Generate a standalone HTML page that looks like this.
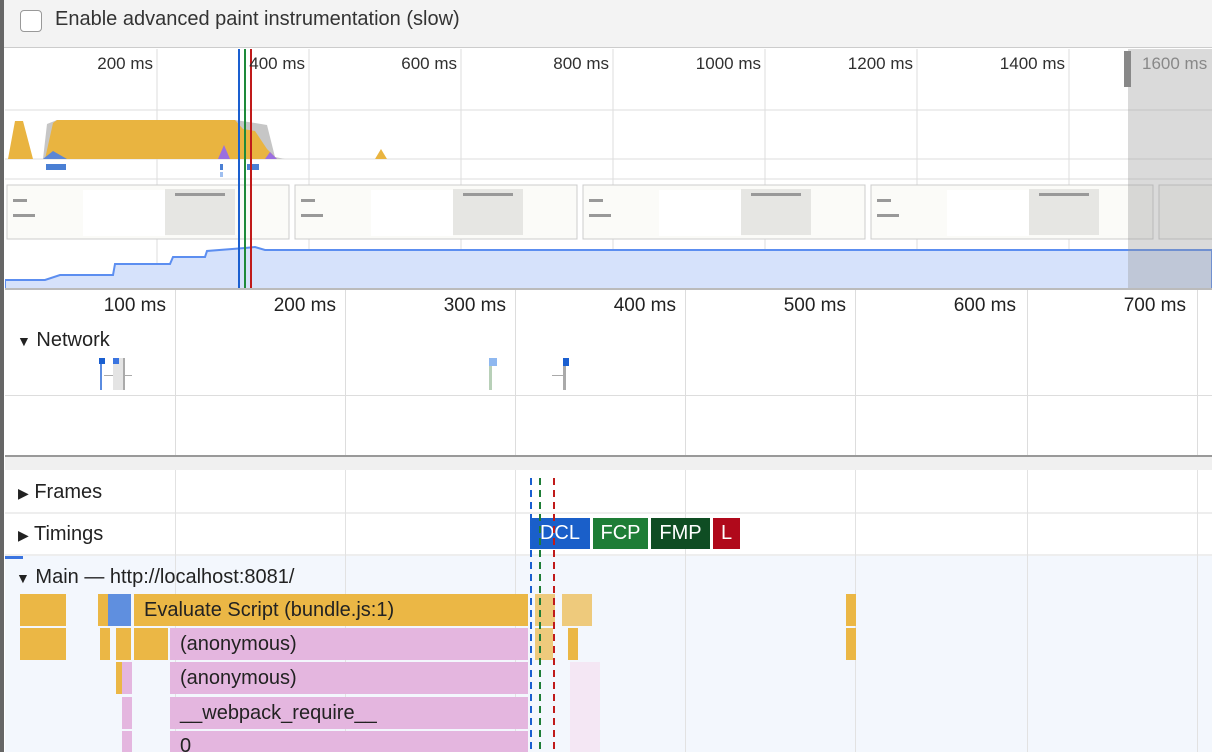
<!DOCTYPE html><html><head><style>
*{margin:0;padding:0;box-sizing:border-box}
html,body{width:1212px;height:752px;overflow:hidden}
body{background:#fff;font-family:"Liberation Sans",sans-serif;position:relative;color:#222}
.a{position:absolute}
.lbl{position:absolute;font-size:17px;color:#303030;text-align:right}
.rl{position:absolute;font-size:19px;color:#222;text-align:right}
.tr{position:absolute;font-size:20px;color:#222}
.v{position:absolute;width:1px;background:#ddd}
.fl{position:absolute;height:32px;font-size:20px;line-height:32px;padding-left:10px;color:#222;white-space:nowrap;overflow:hidden}
</style></head><body>
<div class="a" style="left:0;top:0;width:1212px;height:48px;background:#f3f3f3;border-bottom:1px solid #ccc"></div>
<div class="a" style="left:20px;top:10px;width:22px;height:22px;border:1px solid #999;border-radius:4px;background:#fff"></div>
<div class="a" style="left:55px;top:8px;font-size:20px;color:#333">Enable advanced paint instrumentation (slow)</div>
<div class="a" style="left:0;top:0;width:4px;height:752px;background:#666"></div>

<svg class="a" style="left:5px;top:49px" width="1207" height="241">
<g stroke="#ddd" stroke-width="1">
<line x1="152" y1="0" x2="152" y2="240"/><line x1="304" y1="0" x2="304" y2="240"/><line x1="456" y1="0" x2="456" y2="240"/><line x1="608" y1="0" x2="608" y2="240"/><line x1="760" y1="0" x2="760" y2="240"/><line x1="912" y1="0" x2="912" y2="240"/><line x1="1064" y1="0" x2="1064" y2="240"/>
<line x1="0" y1="61" x2="1207" y2="61"/><line x1="0" y1="110" x2="1207" y2="110"/><line x1="0" y1="130" x2="1207" y2="130"/>
</g>
<path d="M38 110 L42 75 L52 71 L230 71 L250 74 L262 76 L270 108 L280 110 Z" fill="#c6c6c6"/>
<path d="M3 110 L10 72 L18 72 L28 110 L40 110 L48 74 L52 71 L230 71 L238 80 L250 82 L262 100 L272 110 Z" fill="#e9b440"/>
<path d="M38 110 L48 102 L62 110 Z" fill="#5c86d6"/>
<path d="M213 110 L219 96 L225 110 Z" fill="#9b6fe0"/>
<path d="M260 110 L265 103 L272 110 Z" fill="#9b6fe0"/>
<path d="M370 110 L376 100 L382 110 Z" fill="#e9b440"/>
<rect x="41" y="115" width="20" height="6" fill="#4a7fd4"/><rect x="242" y="115" width="12" height="6" fill="#4a7fd4"/><rect x="215" y="115" width="3" height="6" fill="#4a7fd4"/><rect x="215" y="123" width="3" height="5" fill="#9fbff0"/>
<g fill="#fbfbf8" stroke="#ccc"><rect x="2" y="136" width="282" height="54"/><rect x="290" y="136" width="282" height="54"/><rect x="578" y="136" width="282" height="54"/><rect x="866" y="136" width="282" height="54"/><rect x="1154" y="136" width="60" height="54"/></g>
<g fill="#e6e6e3"><rect x="160" y="140" width="70" height="46"/><rect x="448" y="140" width="70" height="46"/><rect x="736" y="140" width="70" height="46"/><rect x="1024" y="140" width="70" height="46"/></g>
<g fill="#fff"><rect x="78" y="141" width="82" height="46"/><rect x="366" y="141" width="82" height="46"/><rect x="654" y="141" width="82" height="46"/><rect x="942" y="141" width="82" height="46"/></g>
<g fill="#999"><rect x="8" y="150" width="14" height="3"/><rect x="8" y="165" width="22" height="3"/><rect x="296" y="150" width="14" height="3"/><rect x="296" y="165" width="22" height="3"/><rect x="584" y="150" width="14" height="3"/><rect x="584" y="165" width="22" height="3"/><rect x="872" y="150" width="14" height="3"/><rect x="872" y="165" width="22" height="3"/><rect x="170" y="144" width="50" height="3"/><rect x="458" y="144" width="50" height="3"/><rect x="746" y="144" width="50" height="3"/><rect x="1034" y="144" width="50" height="3"/></g>
<path d="M0 231 L40 231 L55 226 L108 226 L110 215 L165 215 L168 208 L200 208 L202 202 L240 199 L250 198 L260 201 L1207 201 L1207 240 L0 240 Z" fill="#d6e2fb" stroke="#5c8ef0" stroke-width="2"/>
<rect x="1123" y="0" width="84" height="240" fill="rgba(150,150,150,0.35)"/>
<rect x="1119" y="2" width="7" height="36" fill="#888"/>
<line x1="234" y1="0" x2="234" y2="240" stroke="#1a5fd0" stroke-width="2"/>
<line x1="240" y1="0" x2="240" y2="240" stroke="#1e8a3a" stroke-width="2"/>
<line x1="246" y1="0" x2="246" y2="240" stroke="#c01a1a" stroke-width="2"/>
<line x1="0" y1="240" x2="1207" y2="240" stroke="#bbb" stroke-width="2"/>
</svg>
<div class="lbl" style="right:1059px;top:54px">200 ms</div>
<div class="lbl" style="right:907px;top:54px">400 ms</div>
<div class="lbl" style="right:755px;top:54px">600 ms</div>
<div class="lbl" style="right:603px;top:54px">800 ms</div>
<div class="lbl" style="right:451px;top:54px">1000 ms</div>
<div class="lbl" style="right:299px;top:54px">1200 ms</div>
<div class="lbl" style="right:147px;top:54px">1400 ms</div>
<div class="lbl" style="left:1142px;top:54px;color:#888;text-align:left">1600 ms</div>

<div class="v" style="left:175px;top:290px;height:166px"></div><div class="v" style="left:345px;top:290px;height:166px"></div><div class="v" style="left:515px;top:290px;height:166px"></div><div class="v" style="left:685px;top:290px;height:166px"></div><div class="v" style="left:855px;top:290px;height:166px"></div><div class="v" style="left:1027px;top:290px;height:166px"></div><div class="v" style="left:1197px;top:290px;height:166px"></div>
<div class="rl" style="right:1046px;top:295px">100 ms</div>
<div class="rl" style="right:876px;top:295px">200 ms</div>
<div class="rl" style="right:706px;top:295px">300 ms</div>
<div class="rl" style="right:536px;top:295px">400 ms</div>
<div class="rl" style="right:366px;top:295px">500 ms</div>
<div class="rl" style="right:196px;top:295px">600 ms</div>
<div class="rl" style="right:26px;top:295px">700 ms</div>
<div class="tr" style="left:17px;top:329px"><span style="font-size:14px">▼</span> Network</div>
<div class="a" style="left:100px;top:358px;width:2px;height:32px;background:#5a8be0"></div><div class="a" style="left:99px;top:358px;width:6px;height:6px;background:#1a5fd0"></div>
<div class="a" style="left:104px;top:375px;width:28px;height:1px;background:#aaa"></div>
<div class="a" style="left:113px;top:358px;width:12px;height:32px;background:#e4e4e4;border-right:2px solid #aaa"></div><div class="a" style="left:113px;top:358px;width:6px;height:6px;background:#3a74e0"></div>
<div class="a" style="left:489px;top:358px;width:3px;height:32px;background:#b8d0b8"></div><div class="a" style="left:489px;top:358px;width:8px;height:8px;background:#8fb8f0"></div>
<div class="a" style="left:552px;top:375px;width:12px;height:1px;background:#aaa"></div><div class="a" style="left:563px;top:358px;width:3px;height:32px;background:#aaa"></div><div class="a" style="left:563px;top:358px;width:6px;height:8px;background:#1a5fd0"></div>
<div class="a" style="left:5px;top:395px;width:1207px;height:1px;background:#ddd"></div>
<div class="a" style="left:5px;top:455px;width:1207px;height:15px;background:#f0f0f0;border-top:2px solid #999"></div>

<div class="a" style="left:5px;top:556px;width:1207px;height:196px;background:#f3f7fd"></div>
<div class="a" style="left:5px;top:512px;width:1207px;height:2px;background:#eee"></div>
<div class="a" style="left:5px;top:554px;width:1207px;height:2px;background:#eee"></div>
<div class="a" style="left:5px;top:556px;width:18px;height:3px;background:#3a74e0"></div>
<div class="v" style="left:175px;top:470px;height:282px;background:#e2e2e2"></div><div class="v" style="left:345px;top:470px;height:282px;background:#e2e2e2"></div><div class="v" style="left:515px;top:470px;height:282px;background:#e2e2e2"></div><div class="v" style="left:685px;top:470px;height:282px;background:#e2e2e2"></div><div class="v" style="left:855px;top:470px;height:282px;background:#e2e2e2"></div><div class="v" style="left:1027px;top:470px;height:282px;background:#e2e2e2"></div><div class="v" style="left:1197px;top:470px;height:282px;background:#e2e2e2"></div>
<div class="tr" style="left:18px;top:481px"><span style="font-size:14px">▶</span> Frames</div>
<div class="tr" style="left:18px;top:523px"><span style="font-size:14px">▶</span> Timings</div>
<div class="tr" style="left:16px;top:566px"><span style="font-size:14px">▼</span> Main — http://localhost:8081/</div>

<div class="a" style="left:530px;top:518px;height:31px;width:60px;background:#1a5fc9;color:#fff;font-size:20px;line-height:31px;text-align:center">DCL</div>
<div class="a" style="left:593px;top:518px;height:31px;width:55px;background:#1e7d36;color:#fff;font-size:20px;line-height:31px;text-align:center">FCP</div>
<div class="a" style="left:651px;top:518px;height:31px;width:59px;background:#0f4d23;color:#fff;font-size:20px;line-height:31px;text-align:center">FMP</div>
<div class="a" style="left:713px;top:518px;height:31px;width:27px;background:#b0091b;color:#fff;font-size:20px;line-height:31px;text-align:center">L</div>

<div class="fl" style="left:20px;top:594px;width:46px;background:#ebb745"></div>
<div class="fl" style="left:98px;top:594px;width:3px;background:#ebb745"></div>
<div class="fl" style="left:108px;top:594px;width:23px;background:#5f8fdf"></div>
<div class="fl" style="left:134px;top:594px;width:394px;background:#ebb745">Evaluate Script (bundle.js:1)</div>
<div class="fl" style="left:535px;top:594px;width:20px;background:#ebb745;opacity:.7"></div>
<div class="fl" style="left:562px;top:594px;width:30px;background:#ebb745;opacity:.7"></div>
<div class="fl" style="left:846px;top:594px;width:6px;background:#ebb745"></div>
<div class="fl" style="left:20px;top:628px;width:46px;background:#ebb745"></div>
<div class="fl" style="left:100px;top:628px;width:3px;background:#ebb745"></div>
<div class="fl" style="left:116px;top:628px;width:15px;background:#ebb745"></div>
<div class="fl" style="left:134px;top:628px;width:34px;background:#ebb745"></div>
<div class="fl" style="left:170px;top:628px;width:358px;background:#e4b6df">(anonymous)</div>
<div class="fl" style="left:535px;top:628px;width:18px;background:#ebb745;opacity:.7"></div>
<div class="fl" style="left:568px;top:628px;width:4px;background:#ebb745"></div>
<div class="fl" style="left:846px;top:628px;width:6px;background:#ebb745"></div>
<div class="fl" style="left:116px;top:662px;width:6px;background:#ebb745"></div>
<div class="fl" style="left:122px;top:662px;width:8px;background:#e4b6df"></div>
<div class="fl" style="left:170px;top:662px;width:358px;background:#e4b6df">(anonymous)</div>
<div class="fl" style="left:122px;top:697px;width:8px;background:#e4b6df"></div>
<div class="fl" style="left:170px;top:697px;width:358px;background:#e4b6df">__webpack_require__</div>
<div class="fl" style="left:122px;top:731px;width:8px;height:21px;background:#e4b6df"></div>
<div class="fl" style="left:170px;top:731px;width:358px;height:21px;line-height:30px;background:#e4b6df">0</div>
<div class="a" style="left:570px;top:662px;width:30px;height:90px;background:#f3dff0;opacity:.7"></div>

<svg class="a" style="left:0;top:470px" width="1212" height="282">
<line x1="531" y1="8" x2="531" y2="282" stroke="#1a5fd0" stroke-width="2" stroke-dasharray="7,5"/>
<line x1="540" y1="8" x2="540" y2="282" stroke="#1e7d36" stroke-width="2" stroke-dasharray="7,5"/>
<line x1="554" y1="8" x2="554" y2="282" stroke="#c01a1a" stroke-width="2" stroke-dasharray="7,5"/>
</svg>
</body></html>
